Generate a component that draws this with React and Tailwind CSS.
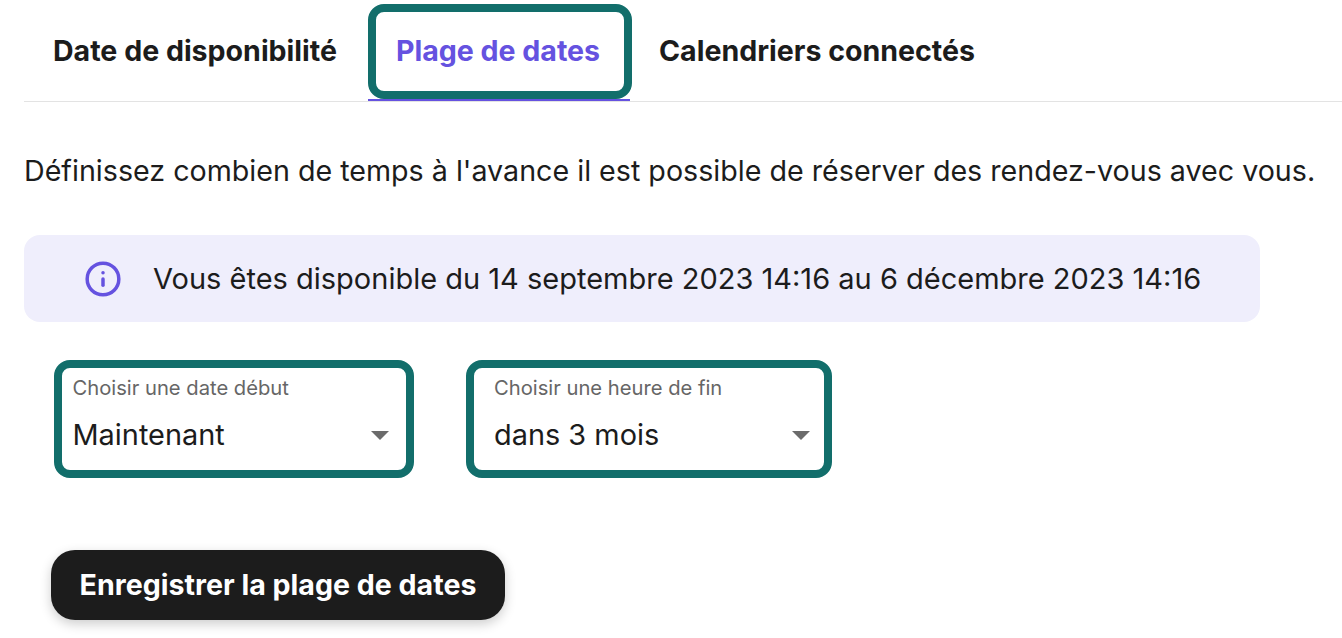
import { Info } from 'lucide-react';

const font = { fontFamily: 'Inter, sans-serif' };

const Picker = ({ label, value, className }) => (
    <div className={`${className} h-[118px] rounded-[16px] border-[8px] border-[#126e6b] bg-white pt-[8px]`}>
        <div className="whitespace-nowrap text-[20.2px] leading-[24px] text-[#666666]">{label}</div>
        <div className="mt-[16px] flex items-center justify-between">
            <span className="whitespace-nowrap text-[28.9px] leading-[38px] text-[#1c1c1c]">{value}</span>
            <span className="h-0 w-0 border-x-[9px] border-t-[9px] border-x-transparent border-t-[#6b6b6b]"></span>
        </div>
    </div>
);

export default function App() {
    return (
        <div className="h-[638px] w-[1342px] overflow-hidden bg-white pl-[24px]" style={font}>
            <div className="flex h-[102px] items-end border-b border-[#e3e3e3] pt-[4px]">
                <div className="flex h-[96px] w-[344px] shrink-0 items-center whitespace-nowrap pb-[4px] pl-[29px] text-[28.55px] font-bold text-[#1c1c1c]">Date de disponibilité</div>
                <div className="relative h-[97px] w-[264px] shrink-0">
                    <div className="flex h-[95px] items-center whitespace-nowrap rounded-[16px] border-[8px] border-[#126e6b] pb-[1px] pl-[20px] text-[28.55px] font-bold text-[#6552e0]">Plage de dates</div>
                    <div className="absolute bottom-0 left-0 right-[2px] h-[2px] bg-[#6552e0]"></div>
                </div>
                <div className="flex h-[96px] items-center whitespace-nowrap pb-[4px] pl-[27px] text-[28.55px] font-bold text-[#1c1c1c]">Calendriers connectés</div>
            </div>
            <p className="mt-[50px] whitespace-nowrap text-[28.65px] leading-[38px] text-[#1c1c1c]">Définissez combien de temps à l'avance il est possible de réserver des rendez-vous avec vous.</p>
            <div className="mt-[45px] flex h-[87px] w-[1236px] items-center rounded-[16px] bg-[#efeefc] pl-[60px]">
                <Info className="h-[38px] w-[38px] text-[#6552e0]" strokeWidth={2.2} />
                <span className="ml-[31px] whitespace-nowrap text-[29px] text-[#1c1c1c]">Vous êtes disponible du 14 septembre 2023 14:16 au 6 décembre 2023 14:16</span>
            </div>
            <div className="ml-[30px] mt-[38px] flex gap-[52px]">
                <Picker label="Choisir une date début" value="Maintenant" className="w-[360px] pl-[10.5px] pr-[17px]" />
                <Picker label="Choisir une heure de fin" value="dans 3 mois" className="w-[366px] pl-[20px] pr-[14px]" />
            </div>
            <button className="ml-[27px] mt-[72px] h-[70px] w-[454px] whitespace-nowrap rounded-[24px] bg-[#1c1c1c] text-[28.6px] font-bold text-white shadow-[0_4px_12px_rgba(0,0,0,0.2)]">Enregistrer la plage de dates</button>
        </div>
    );
}
